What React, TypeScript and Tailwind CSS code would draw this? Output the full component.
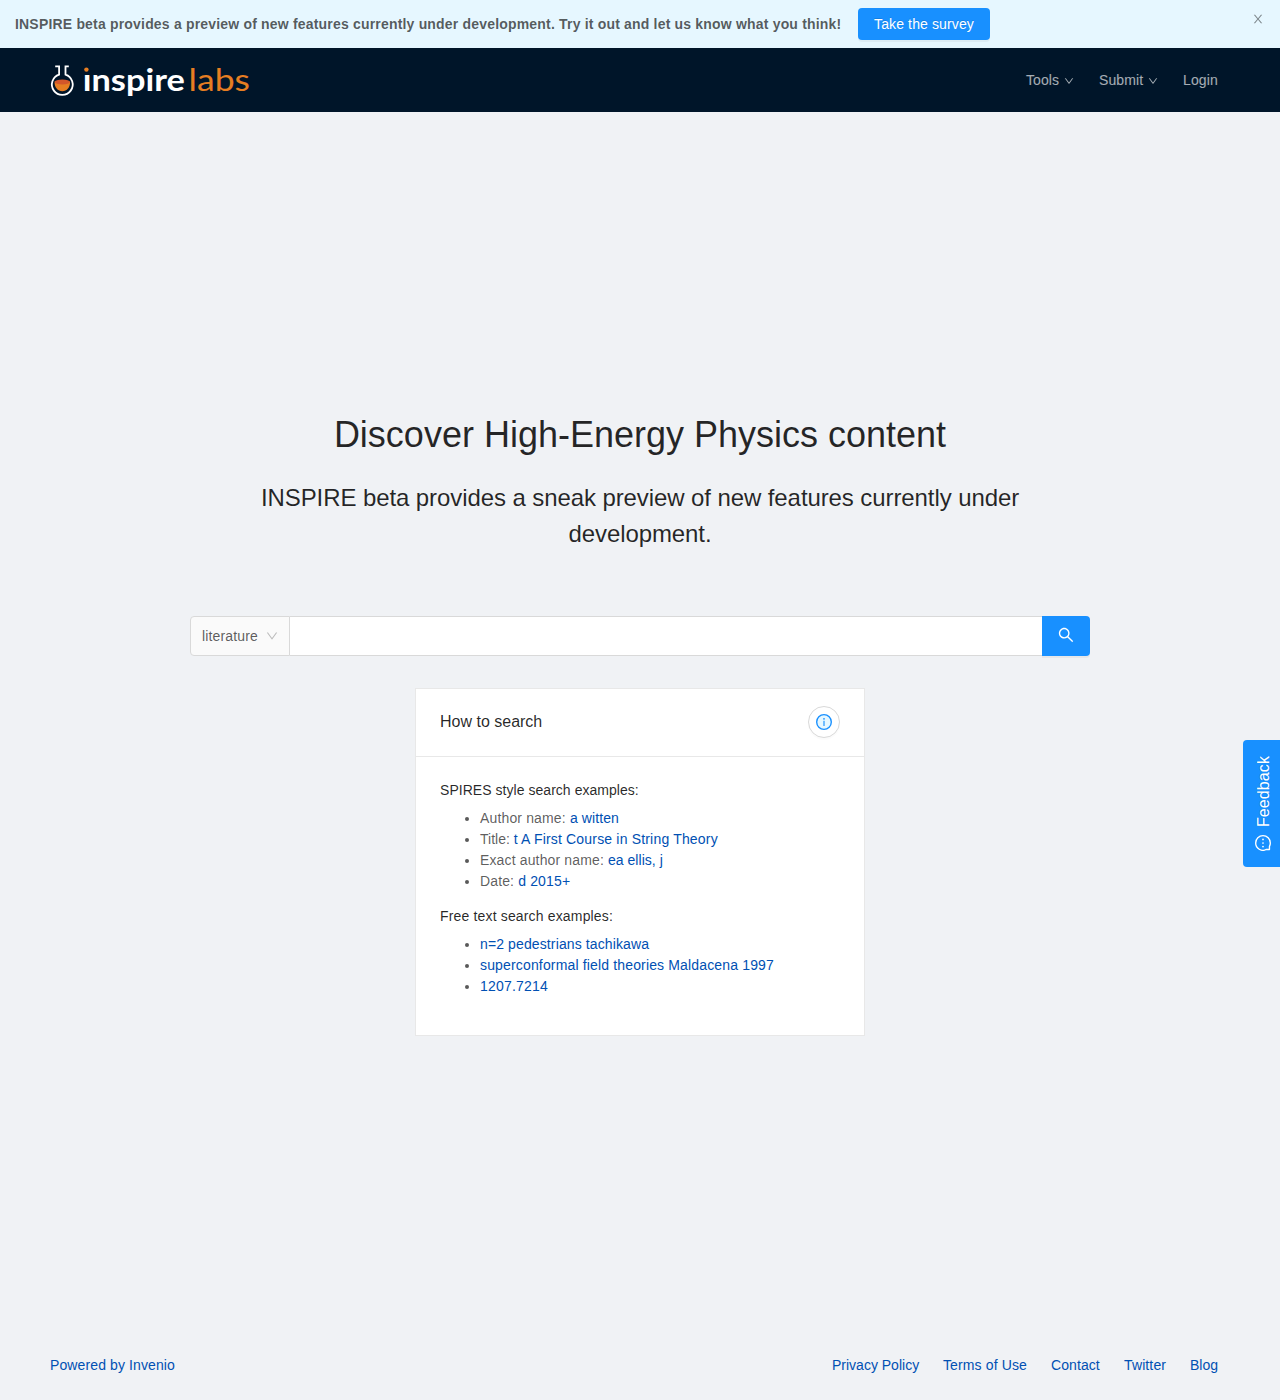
import React from "react";

type IconProps = { size: number; className?: string };

const paths = {
  close:
    "M563.8 512l262.5-312.9c4.4-5.2.7-13.1-6.1-13.1h-79.8c-4.7 0-9.2 2.1-12.3 5.7L511.6 449.8 295.1 191.7c-3-3.6-7.5-5.7-12.3-5.7H203c-6.8 0-10.5 7.9-6.1 13.1L459.4 512 196.9 824.9A7.95 7.95 0 0 0 203 838h79.8c4.7 0 9.2-2.1 12.3-5.7l216.5-258.1 216.5 258.1c3 3.6 7.5 5.7 12.3 5.7h79.8c6.8 0 10.5-7.9 6.1-13.1L563.8 512z",
  down: "M884 256h-75c-5.1 0-9.9 2.5-12.9 6.6L512 654.2 227.9 262.6c-3-4.1-7.8-6.6-12.9-6.6h-75c-6.5 0-10.3 7.4-6.5 12.7l352.6 486.1c12.8 17.6 39 17.6 51.7 0l352.6-486.1c3.9-5.3.1-12.7-6.4-12.7z",
  search:
    "M909.6 854.5L649.9 594.8C690.2 542.7 712 479 712 412c0-80.2-31.3-155.4-87.9-212.1-56.6-56.7-132-87.9-212.1-87.9s-155.5 31.3-212.1 87.9C143.2 256.5 112 331.8 112 412c0 80.1 31.3 155.5 87.9 212.1C256.5 680.8 331.8 712 412 712c67 0 130.6-21.8 182.7-62l259.7 259.6a8.2 8.2 0 0 0 11.6 0l43.6-43.5a8.2 8.2 0 0 0 0-11.6zM570.4 570.4C528 612.7 471.8 636 412 636s-116-23.3-158.4-65.6C211.3 528 188 471.8 188 412s23.3-116.1 65.6-158.4C296 211.3 352.2 188 412 188s116.1 23.2 158.4 65.6S636 352.2 636 412s-23.3 116.1-65.6 158.4z",
};

function Icon({ name, size, className }: IconProps & { name: keyof typeof paths }) {
  return (
    <svg width={size} height={size} viewBox="64 64 896 896" fill="currentColor" className={className}>
      <path d={paths[name]} />
    </svg>
  );
}

function InfoIcon({ size }: IconProps) {
  return (
    <svg width={size} height={size} viewBox="64 64 896 896">
      <circle cx="512" cy="512" r="410" fill="#e6f7ff" stroke="#1890ff" strokeWidth="76" />
      <circle cx="512" cy="336" r="48" fill="#1890ff" />
      <rect x="480" y="448" width="64" height="288" rx="8" fill="#1890ff" />
    </svg>
  );
}

function MessageIcon({ size, className }: IconProps) {
  return (
    <svg width={size} height={size} viewBox="64 64 896 896" className={className}>
      <path
        d="M512 102A410 410 0 1 1 512 922A410 410 0 0 1 320 874H150V704A410 410 0 0 1 512 102Z"
        fill="none"
        stroke="currentColor"
        strokeWidth="76"
        strokeLinejoin="round"
      />
      <g fill="currentColor">
        <circle cx="312" cy="512" r="48" />
        <circle cx="512" cy="512" r="48" />
        <circle cx="712" cy="512" r="48" />
      </g>
    </svg>
  );
}

function Banner() {
  return (
    <div className="flex h-12 items-start justify-between bg-[#e6f7ff] pl-[15px] pr-4">
      <div className="flex h-12 items-center">
        <strong className="w-[827px] whitespace-nowrap font-bold tracking-[0.185px]">
          INSPIRE beta provides a preview of new features currently under development. Try it out and let us know what
          you think!
        </strong>
        <button className="ml-4 h-8 w-[132px] rounded bg-[#1890ff] tracking-[0.13px] text-white shadow-[0_2px_0_rgba(0,0,0,0.045)] [text-shadow:0_-1px_0_rgba(0,0,0,0.12)]">
          Take the survey
        </button>
      </div>
      <button aria-label="Close" className="mt-[13px] text-black/45">
        <Icon name="close" size={12} />
      </button>
    </div>
  );
}

function Logo() {
  return (
    <svg width="200" height="44" viewBox="0 -4 200 44" className="overflow-visible" role="img" aria-label="inspire labs">
      <path
        d="M5.2 4.4H9.1V12.6A10.4 10.4 0 1 0 15.5 12.6V4.4H18.8"
        fill="none"
        stroke="#fff"
        strokeWidth="1.8"
      />
      <path d="M4.6 19.5H20C20.4 25.5 16.8 29.2 12.3 29.2S4.2 25.5 4.6 19.5Z" fill="#e67e22" />
      <ellipse cx="12.3" cy="20" rx="7.6" ry="2.5" fill="#d3562a" />
      <text
        x="32.8"
        y="28.5"
        textLength="102"
        lengthAdjust="spacingAndGlyphs"
        className="fill-white font-['Lato'] text-[30px] font-bold"
      >
        inspire
      </text>
      <rect x="32" y="2" width="9" height="9" fill="#001529" />
      <circle cx="36.4" cy="7.6" r="2.2" fill="#e67e22" />
      <text
        x="138.6"
        y="28.5"
        textLength="61.4"
        lengthAdjust="spacingAndGlyphs"
        className="fill-[#e67e22] font-['Lato'] text-[31px] font-normal"
      >
        labs
      </text>
    </svg>
  );
}

function Header() {
  return (
    <header className="flex h-16 items-center justify-between bg-[#001529] pl-[50px] pr-[62px]">
      <Logo />
      <nav className="flex text-white/65">
        <a className="flex w-[73px] items-center tracking-[0.1px]">
          Tools <Icon name="down" size={10} className="ml-[5px] mt-px" />
        </a>
        <a className="flex w-[84px] items-center tracking-[0.1px]">
          Submit <Icon name="down" size={10} className="ml-[5px] mt-px" />
        </a>
        <a className="w-[35px] tracking-[0.15px]">Login</a>
      </nav>
    </header>
  );
}

function SearchBar() {
  return (
    <div className="mt-16 flex h-10 w-[900px]">
      <div className="flex w-[100px] items-center justify-between rounded-l border border-[#d9d9d9] bg-[#fafafa] pl-[11px] pr-[11px] tracking-[0.15px]">
        literature
        <Icon name="down" size={12} className="text-black/25" />
      </div>
      <input className="min-w-0 flex-1 border-y border-[#d9d9d9] bg-white px-3 outline-none" aria-label="Search" />
      <button
        aria-label="Submit search"
        className="flex w-12 items-center justify-center rounded-r bg-[#1890ff] pb-0.5 text-white shadow-[0_2px_0_rgba(0,0,0,0.045)]"
      >
        <Icon name="search" size={16} />
      </button>
    </div>
  );
}

type Example = { label?: string; query: string; labelClass?: string; queryClass: string };

const spiresExamples: Example[] = [
  { label: "Author name: ", labelClass: "tracking-[0.15px]", query: "a witten", queryClass: "tracking-[0.1px]" },
  { label: "Title: ", query: "t A First Course in String Theory", queryClass: "tracking-[0.18px]" },
  { label: "Exact author name: ", labelClass: "tracking-[0.14px]", query: "ea ellis, j", queryClass: "tracking-[0.04px]" },
  { label: "Date: ", labelClass: "tracking-[0.13px]", query: "d 2015+", queryClass: "tracking-[0.17px]" },
];

const freeTextExamples: Example[] = [
  { query: "n=2 pedestrians tachikawa", queryClass: "tracking-[0.12px]" },
  { query: "superconformal field theories Maldacena 1997", queryClass: "tracking-[0.155px]" },
  { query: "1207.7214", queryClass: "tracking-[0.2px]" },
];

function Examples({ title, titleClass, items }: { title: string; titleClass: string; items: Example[] }) {
  return (
    <section>
      <h4 className={`mb-[7px] text-black/85 ${titleClass}`}>{title}</h4>
      <ul className="mb-3.5 list-disc pl-10">
        {items.map((item) => (
          <li key={item.query}>
            {item.label && <span className={item.labelClass}>{item.label}</span>}
            <a className={`text-[#0050b3] ${item.queryClass}`}>{item.query}</a>
          </li>
        ))}
      </ul>
    </section>
  );
}

function HowToSearch() {
  return (
    <div className="mt-8 h-[348px] w-[450px] border border-[#e8e8e8] bg-white">
      <div className="flex h-[68px] items-center justify-between border-b border-[#e8e8e8] px-6 pb-0.5">
        <h3 className="text-[16px] leading-6 text-black/85">How to search</h3>
        <button
          aria-label="Help"
          className="flex size-8 items-center justify-center rounded-full border border-[#d9d9d9] bg-white shadow-[0_2px_0_rgba(0,0,0,0.015)]"
        >
          <InfoIcon size={16} />
        </button>
      </div>
      <div className="px-6 pt-[23px]">
        <Examples title="SPIRES style search examples:" titleClass="tracking-[0.04px]" items={spiresExamples} />
        <Examples title="Free text search examples:" titleClass="tracking-[0.16px]" items={freeTextExamples} />
      </div>
    </div>
  );
}

function Footer() {
  return (
    <footer className="flex h-[69px] items-start justify-between pl-[50px] pr-[62px] pt-6 text-[#0050b3]">
      <a className="tracking-[0.11px]">Powered by Invenio</a>
      <div className="flex gap-6 whitespace-nowrap">
        <a className="w-[87px]">Privacy Policy</a>
        <a className="w-[84px] tracking-[0.12px]">Terms of Use</a>
        <a className="w-[49px] tracking-[0.08px]">Contact</a>
        <a className="w-[42px] tracking-[0.12px]">Twitter</a>
        <a className="w-7">Blog</a>
      </div>
    </footer>
  );
}

export default function App() {
  return (
    <div className="relative flex h-[1400px] flex-col overflow-hidden bg-[#f0f2f5] font-['Liberation_Sans',Arial,sans-serif] text-[14px] leading-[21px] text-black/65">
      <Banner />
      <Header />
      <main className="flex flex-1 flex-col items-center pt-[296px]">
        <h1 className="text-[36px] leading-[54px] text-black/85">Discover High-Energy Physics content</h1>
        <p className="mt-[18px] w-[800px] text-center text-[24px] leading-9 tracking-[-0.09px] text-black/85">
          INSPIRE beta provides a sneak preview of new features currently under development.
        </p>
        <SearchBar />
        <HowToSearch />
      </main>
      <Footer />
      <button className="absolute right-0 top-[740px] flex h-[127px] w-[37px] rotate-180 items-center justify-center gap-2 rounded-r bg-[#1890ff] pr-[3px] text-[16px] tracking-[0.1px] text-white [writing-mode:vertical-rl] [text-shadow:0_-1px_0_rgba(0,0,0,0.12)]">
        <MessageIcon size={16} className="rotate-90" />
        Feedback
      </button>
    </div>
  );
}
